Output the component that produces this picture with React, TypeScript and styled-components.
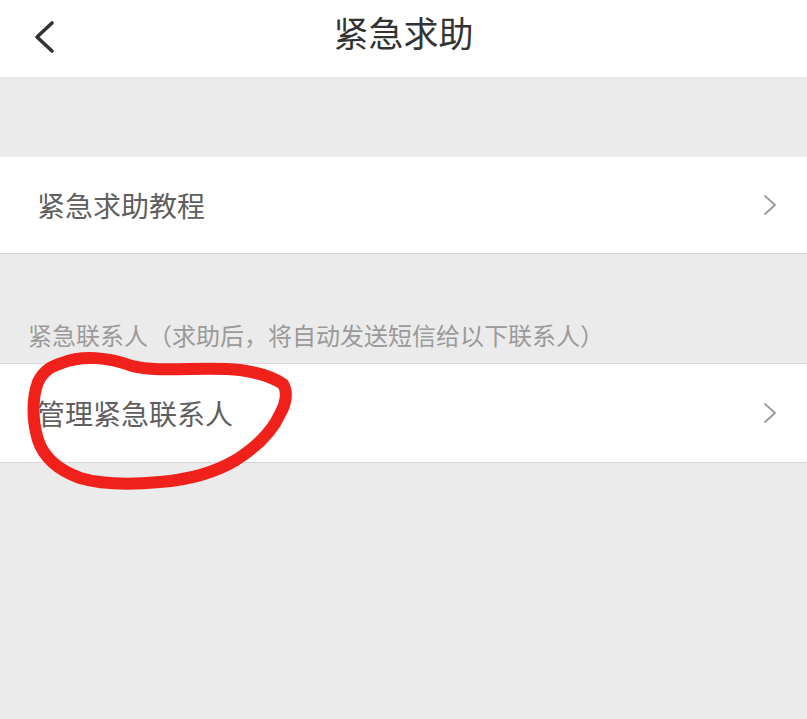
import React from "react";
import styled, { createGlobalStyle } from "styled-components";

const Global = createGlobalStyle`
  html, body { margin: 0; padding: 0; background: #ebebeb; }
  body { font-family: "Noto Sans CJK SC", "Noto Sans", sans-serif; }
`;

const Page = styled.div`
  position: relative;
  width: 807px;
  min-height: 719px;
  background: #ebebeb;
  display: flex;
  flex-direction: column;
`;

const Header = styled.header`
  height: 77px;
  background: #ffffff;
  display: grid;
  grid-template-columns: 80px 1fr 80px;
  align-items: center;
  box-shadow: 0 1px 3px rgba(0, 0, 0, 0.04);
`;

const BackButton = styled.div`
  display: flex;
  align-items: center;
  padding-left: 33px;
  padding-bottom: 4px;
  height: 100%;
  box-sizing: border-box;
`;

const Title = styled.h1`
  margin: 0;
  text-align: center;
  font-size: 35px;
  font-weight: 400;
  color: #333333;
  line-height: 1;
  padding-bottom: 14px;
`;

const Spacer = styled.div<{ $h: number }>`
  height: ${(p) => p.$h}px;
`;

const Row = styled.div<{ $top?: boolean; $h: number }>`
  box-sizing: border-box;
  height: ${(p) => p.$h}px;
  background: #ffffff;
  display: flex;
  align-items: center;
  justify-content: space-between;
  padding: 0 30px 0 37px;
  border-top: ${(p) => (p.$top ? "1px solid #dcdcdc" : "none")};
  border-bottom: 1px solid #d6d6d6;
`;

const RowText = styled.span`
  font-size: 28px;
  color: #5e5e5e;
  line-height: 1;
`;

const SectionLabel = styled.div`
  height: 109px;
  display: flex;
  align-items: flex-end;
  padding: 0 0 16px 28px;
  box-sizing: border-box;
  font-size: 24px;
  color: #9a9a9a;
  line-height: 1;
`;

const Overlay = styled.svg`
  position: absolute;
  left: 0;
  top: 0;
  width: 807px;
  height: 719px;
  pointer-events: none;
`;

const Chevron = () => (
  <svg width="14" height="22" viewBox="0 0 14 22">
    <polyline
      points="2,2 12,11 2,20"
      fill="none"
      stroke="#9a9a9a"
      strokeWidth="1.8"
      strokeLinecap="round"
      strokeLinejoin="round"
    />
  </svg>
);

export default function App() {
  return (
    <>
      <Global />
      <Page>
        <Header>
          <BackButton>
            <svg width="24" height="34" viewBox="0 0 24 34">
              <polyline
                points="19,3 4,17 19,31"
                fill="none"
                stroke="#333"
                strokeWidth="3.6"
                strokeLinecap="round"
                strokeLinejoin="round"
              />
            </svg>
          </BackButton>
          <Title>紧急求助</Title>
          <div />
        </Header>
        <Spacer $h={80} />
        <Row $h={97}>
          <RowText>紧急求助教程</RowText>
          <Chevron />
        </Row>
        <SectionLabel>紧急联系人（求助后，将自动发送短信给以下联系人）</SectionLabel>
        <Row $top $h={100}>
          <RowText>管理紧急联系人</RowText>
          <Chevron />
        </Row>
        <Overlay viewBox="0 0 807 719">
          <path
            d="M 62 363 C 82 355, 108 357, 132 366 C 160 373, 205 366, 240 370 C 262 373, 274 378, 283 384 C 288 392, 286 404, 280 414 C 272 432, 258 446, 236 460 C 214 473, 186 480, 160 482 C 128 485, 100 484, 80 478 C 58 470, 44 458, 38 440 C 32 420, 32 398, 38 382 C 44 370, 52 366, 62 363 Z"
            fill="none"
            stroke="#f0211b"
            strokeWidth="12"
            strokeLinejoin="round"
          />
        </Overlay>
      </Page>
    </>
  );
}
